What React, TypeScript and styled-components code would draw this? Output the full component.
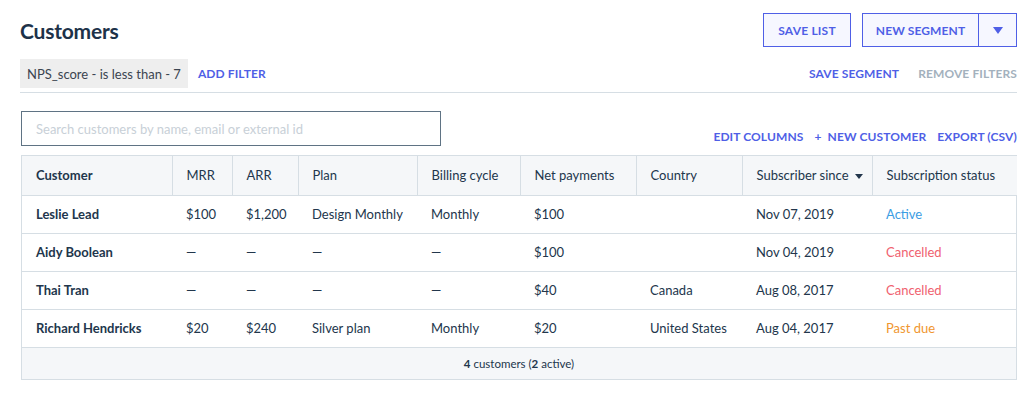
import React from "react";
import styled, { createGlobalStyle } from "styled-components";

const Global = createGlobalStyle`
  html, body { margin: 0; padding: 0; background: #fff; }
  body { font-family: "Lato", "Noto Sans", sans-serif; color: #22364c; }
  * { box-sizing: border-box; }
`;

const Page = styled.div`
  width: 1032px;
  padding: 13px 15px 0 20px;
`;

const TopBar = styled.div`
  display: flex;
  align-items: center;
  justify-content: space-between;
  height: 34px;
`;

const Title = styled.h1`
  margin: 0;
  font-size: 21px;
  font-weight: 700;
  color: #1d3249;
  letter-spacing: -0.2px;
`;

const ButtonGroup = styled.div`
  display: flex;
  gap: 11px;
`;

const OutlineButton = styled.button<{ $w?: number }>`
  height: 34px;
  width: ${(p) => (p.$w ? `${p.$w}px` : "auto")};
  border: 1.5px solid #4f5fe6;
  background: #f6f7ff;
  color: #4f5fe6;
  font-family: inherit;
  font-size: 12px;
  font-weight: 700;
  letter-spacing: 0.2px;
  text-transform: uppercase;
  display: flex;
  align-items: center;
  justify-content: center;
  padding: 0;
`;

const Split = styled.div`
  display: flex;
  border: 1.5px solid #4f5fe6;
  background: #f6f7ff;
  height: 34px;
`;

const SplitMain = styled.span`
  width: 116px;
  display: flex;
  align-items: center;
  justify-content: center;
  color: #4f5fe6;
  font-size: 12px;
  font-weight: 700;
  letter-spacing: 0.1px;
  border-right: 1.5px solid #4f5fe6;
`;

const SplitCaret = styled.span`
  width: 37px;
  display: flex;
  align-items: center;
  justify-content: center;
`;

const FilterRow = styled.div`
  display: flex;
  align-items: center;
  justify-content: space-between;
  margin-top: 12px;
  padding-bottom: 4px;
  border-bottom: 1px solid #d6dee4;
`;

const FilterLeft = styled.div`
  display: flex;
  align-items: center;
  gap: 10px;
`;

const Chip = styled.div`
  background: #eeeeee;
  height: 29px;
  padding: 0 7px;
  display: flex;
  align-items: center;
  font-size: 13px;
  color: #3b4450;
`;

const LinkText = styled.span<{ $muted?: boolean }>`
  font-size: 12px;
  font-weight: 700;
  letter-spacing: 0.1px;
  text-transform: uppercase;
  color: ${(p) => (p.$muted ? "#a3b1bd" : "#4f5fe6")};
  white-space: nowrap;
`;

const LinkGroup = styled.div<{ $gap: number }>`
  display: flex;
  align-items: center;
  gap: ${(p) => p.$gap}px;
`;

const SearchRow = styled.div`
  display: flex;
  align-items: flex-end;
  justify-content: space-between;
  margin-top: 18px;
  padding-left: 1px;
`;

const Search = styled.div`
  width: 420px;
  height: 35px;
  border: 1px solid #5f7384;
  display: flex;
  align-items: center;
  padding-left: 14px;
  font-size: 13px;
  color: #c8d0d7;
`;

const TableWrap = styled.div`
  margin-top: 9px;
  margin-left: 1px;
  border: 1px solid #d6dee4;
`;

const Table = styled.table`
  width: 100%;
  border-collapse: collapse;
  table-layout: fixed;
  font-size: 13px;
`;

const Th = styled.th<{ $w: number; $bold?: boolean }>`
  width: ${(p) => p.$w}px;
  height: 39px;
  background: #f5f7f9;
  text-align: left;
  font-weight: ${(p) => (p.$bold ? 700 : 400)};
  color: #22364c;
  padding: 0 0 0 14px;
  border-left: 1px solid #d6dee4;
  border-bottom: 1px solid #d6dee4;
  white-space: nowrap;
  &:first-child { border-left: none; }
`;

const Td = styled.td<{ $bold?: boolean; $color?: string }>`
  height: 38px;
  padding: 0 0 0 14px;
  border-bottom: 1px solid #d6dee4;
  font-weight: ${(p) => (p.$bold ? 700 : 400)};
  color: ${(p) => p.$color || "#22364c"};
  white-space: nowrap;
`;

const Footer = styled.div`
  height: 31px;
  background: #f5f7f9;
  display: flex;
  align-items: center;
  justify-content: center;
  font-size: 11.5px;
  color: #22364c;
  b { font-weight: 700; }
`;

const SortCaret = styled.svg`
  margin-left: 6px;
  vertical-align: middle;
`;

const cols: { label: string; w: number; bold?: boolean; sort?: boolean }[] = [
  { label: "Customer", w: 150, bold: true },
  { label: "MRR", w: 60 },
  { label: "ARR", w: 66 },
  { label: "Plan", w: 119 },
  { label: "Billing cycle", w: 103 },
  { label: "Net payments", w: 116 },
  { label: "Country", w: 106 },
  { label: "Subscriber since", w: 130, sort: true },
  { label: "Subscription status", w: 145 },
];

const statusColor: Record<string, string> = {
  Active: "#3b9de3",
  Cancelled: "#f0616f",
  "Past due": "#f0962f",
};

const rows = [
  ["Leslie Lead", "$100", "$1,200", "Design Monthly", "Monthly", "$100", "", "Nov 07, 2019", "Active"],
  ["Aidy Boolean", "—", "—", "—", "—", "$100", "", "Nov 04, 2019", "Cancelled"],
  ["Thai Tran", "—", "—", "—", "—", "$40", "Canada", "Aug 08, 2017", "Cancelled"],
  ["Richard Hendricks", "$20", "$240", "Silver plan", "Monthly", "$20", "United States", "Aug 04, 2017", "Past due"],
];

export default function App() {
  return (
    <Page>
      <Global />
      <TopBar>
        <Title>Customers</Title>
        <ButtonGroup>
          <OutlineButton $w={88}>Save list</OutlineButton>
          <Split>
            <SplitMain>NEW SEGMENT</SplitMain>
            <SplitCaret>
              <svg width="10" height="7" viewBox="0 0 10 7">
                <path d="M0 0 H10 L5 7 Z" fill="#4f5fe6" />
              </svg>
            </SplitCaret>
          </Split>
        </ButtonGroup>
      </TopBar>
      <FilterRow>
        <FilterLeft>
          <Chip>NPS_score - is less than - 7</Chip>
          <LinkText>Add filter</LinkText>
        </FilterLeft>
        <LinkGroup $gap={19}>
          <LinkText>Save segment</LinkText>
          <LinkText $muted>Remove filters</LinkText>
        </LinkGroup>
      </FilterRow>
      <SearchRow>
        <Search>Search customers by name, email or external id</Search>
        <LinkGroup $gap={11} style={{ marginBottom: 2 }}>
          <LinkText>Edit columns</LinkText>
          <LinkText>+&nbsp;&nbsp;New customer</LinkText>
          <LinkText>Export (CSV)</LinkText>
        </LinkGroup>
      </SearchRow>
      <TableWrap>
        <Table>
          <thead>
            <tr>
              {cols.map((c) => (
                <Th key={c.label} $w={c.w} $bold={c.bold}>
                  {c.label}
                  {c.sort && (
                    <SortCaret width="8" height="5" viewBox="0 0 8 5">
                      <path d="M0 0 H8 L4 5 Z" fill="#22364c" />
                    </SortCaret>
                  )}
                </Th>
              ))}
            </tr>
          </thead>
          <tbody>
            {rows.map((r) => (
              <tr key={r[0]}>
                {r.map((v, i) => (
                  <Td key={i} $bold={i === 0} $color={i === 8 ? statusColor[v] : undefined}>
                    {v}
                  </Td>
                ))}
              </tr>
            ))}
          </tbody>
        </Table>
        <Footer>
          <span>
            <b>4</b> customers (<b>2</b> active)
          </span>
        </Footer>
      </TableWrap>
    </Page>
  );
}
